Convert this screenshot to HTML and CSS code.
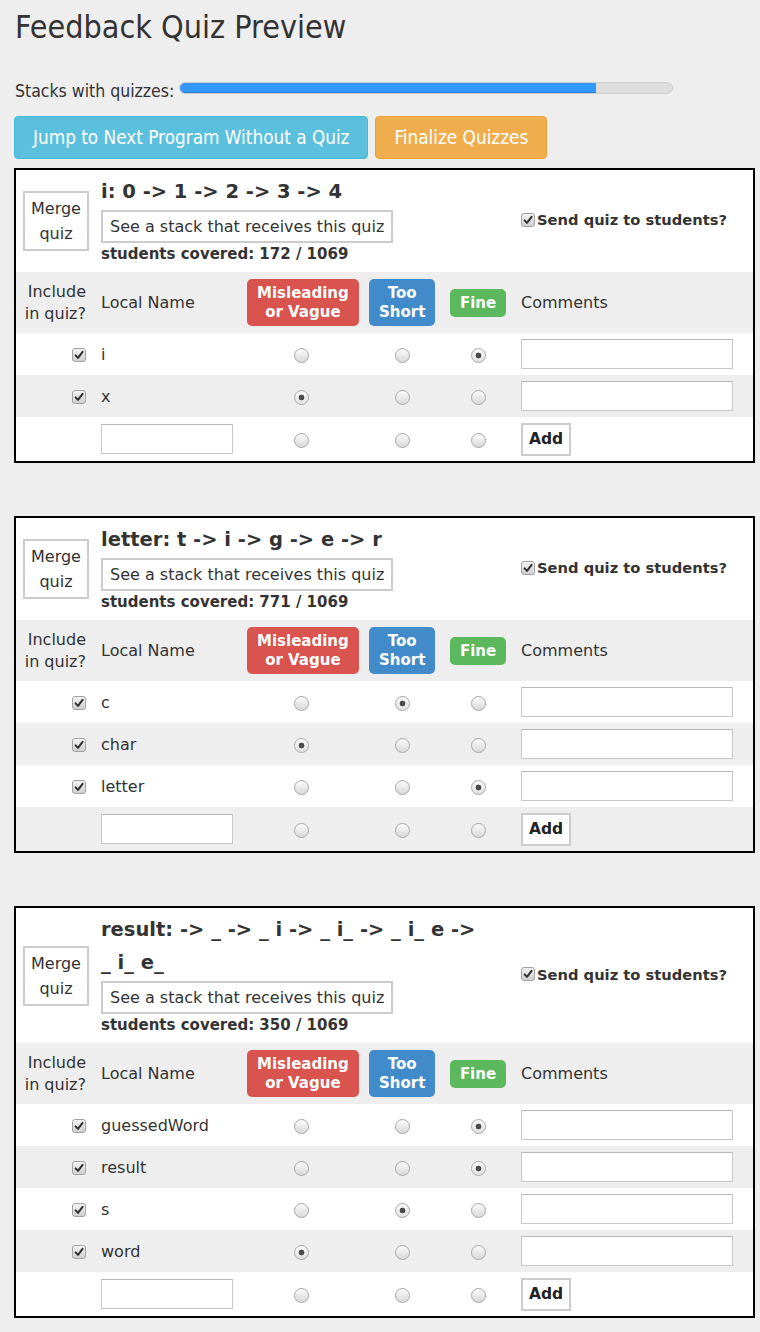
FILE: index.html
```html
<!DOCTYPE html>
<html lang="en">
<head>
<meta charset="utf-8">
<title>Feedback Quiz Preview</title>
<link rel="stylesheet" href="styles.css">
</head>
<body>
<h1 class="page-title">Feedback Quiz Preview</h1>
<div class="progress-line">
  <span class="progress-label">Stacks with quizzes:</span>
  <div class="progress"><div class="progress-fill" style="width:84.4%"></div></div>
</div>
<div class="actions">
  <button class="btn btn-info">Jump to Next Program Without a Quiz</button>
  <button class="btn btn-warning">Finalize Quizzes</button>
</div>

<div class="card">
<table class="quiz">
<colgroup><col class="c1"><col class="c2"><col class="c3"><col class="c4"><col class="c5"><col class="c6"></colgroup>
<tr class="summary">
  <td class="merge-cell"><button class="plain merge">Merge<br>quiz</button></td>
  <td colspan="4" class="info-cell">
    <div class="quiz-title">i: 0 -&gt; 1 -&gt; 2 -&gt; 3 -&gt; 4</div>
    <button class="plain see">See a stack that receives this quiz</button>
    <div class="covered">students covered: 172 / 1069</div>
  </td>
  <td class="send-cell"><label class="send"><span class="cb"><svg viewBox="0 0 12 12"><path d="M2.6 6.4 L5 8.9 L9.6 2.9"/></svg></span>Send quiz to students?</label></td>
</tr>
<tr class="head">
  <th class="inc">Include<br>in quiz?</th>
  <th class="txt">Local Name</th>
  <th class="mid"><span class="badge red">Misleading<br>or Vague</span></th>
  <th class="mid"><span class="badge blue">Too<br>Short</span></th>
  <th class="mid"><span class="badge green">Fine</span></th>
  <th class="txt">Comments</th>
</tr>
<tr class="row">
  <td class="inc"><span class="cb"><svg viewBox="0 0 12 12"><path d="M2.6 6.4 L5 8.9 L9.6 2.9"/></svg></span></td>
  <td class="txt">i</td>
  <td class="mid"><span class="rd"></span></td>
  <td class="mid"><span class="rd"></span></td>
  <td class="mid"><span class="rd on"></span></td>
  <td class="txt"><input class="comment" type="text"></td>
</tr>
<tr class="row">
  <td class="inc"><span class="cb"><svg viewBox="0 0 12 12"><path d="M2.6 6.4 L5 8.9 L9.6 2.9"/></svg></span></td>
  <td class="txt">x</td>
  <td class="mid"><span class="rd on"></span></td>
  <td class="mid"><span class="rd"></span></td>
  <td class="mid"><span class="rd"></span></td>
  <td class="txt"><input class="comment" type="text"></td>
</tr>
<tr class="add-row">
  <td class="inc"></td>
  <td class="txt"><input class="new-name" type="text"></td>
  <td class="mid"><span class="rd"></span></td>
  <td class="mid"><span class="rd"></span></td>
  <td class="mid"><span class="rd"></span></td>
  <td class="txt"><button class="plain add">Add</button></td>
</tr>
</table>
</div>

<div class="card">
<table class="quiz">
<colgroup><col class="c1"><col class="c2"><col class="c3"><col class="c4"><col class="c5"><col class="c6"></colgroup>
<tr class="summary">
  <td class="merge-cell"><button class="plain merge">Merge<br>quiz</button></td>
  <td colspan="4" class="info-cell">
    <div class="quiz-title">letter: t -&gt; i -&gt; g -&gt; e -&gt; r</div>
    <button class="plain see">See a stack that receives this quiz</button>
    <div class="covered">students covered: 771 / 1069</div>
  </td>
  <td class="send-cell"><label class="send"><span class="cb"><svg viewBox="0 0 12 12"><path d="M2.6 6.4 L5 8.9 L9.6 2.9"/></svg></span>Send quiz to students?</label></td>
</tr>
<tr class="head">
  <th class="inc">Include<br>in quiz?</th>
  <th class="txt">Local Name</th>
  <th class="mid"><span class="badge red">Misleading<br>or Vague</span></th>
  <th class="mid"><span class="badge blue">Too<br>Short</span></th>
  <th class="mid"><span class="badge green">Fine</span></th>
  <th class="txt">Comments</th>
</tr>
<tr class="row">
  <td class="inc"><span class="cb"><svg viewBox="0 0 12 12"><path d="M2.6 6.4 L5 8.9 L9.6 2.9"/></svg></span></td>
  <td class="txt">c</td>
  <td class="mid"><span class="rd"></span></td>
  <td class="mid"><span class="rd on"></span></td>
  <td class="mid"><span class="rd"></span></td>
  <td class="txt"><input class="comment" type="text"></td>
</tr>
<tr class="row">
  <td class="inc"><span class="cb"><svg viewBox="0 0 12 12"><path d="M2.6 6.4 L5 8.9 L9.6 2.9"/></svg></span></td>
  <td class="txt">char</td>
  <td class="mid"><span class="rd on"></span></td>
  <td class="mid"><span class="rd"></span></td>
  <td class="mid"><span class="rd"></span></td>
  <td class="txt"><input class="comment" type="text"></td>
</tr>
<tr class="row">
  <td class="inc"><span class="cb"><svg viewBox="0 0 12 12"><path d="M2.6 6.4 L5 8.9 L9.6 2.9"/></svg></span></td>
  <td class="txt">letter</td>
  <td class="mid"><span class="rd"></span></td>
  <td class="mid"><span class="rd"></span></td>
  <td class="mid"><span class="rd on"></span></td>
  <td class="txt"><input class="comment" type="text"></td>
</tr>
<tr class="add-row">
  <td class="inc"></td>
  <td class="txt"><input class="new-name" type="text"></td>
  <td class="mid"><span class="rd"></span></td>
  <td class="mid"><span class="rd"></span></td>
  <td class="mid"><span class="rd"></span></td>
  <td class="txt"><button class="plain add">Add</button></td>
</tr>
</table>
</div>

<div class="card">
<table class="quiz">
<colgroup><col class="c1"><col class="c2"><col class="c3"><col class="c4"><col class="c5"><col class="c6"></colgroup>
<tr class="summary">
  <td class="merge-cell"><button class="plain merge">Merge<br>quiz</button></td>
  <td colspan="4" class="info-cell">
    <div class="quiz-title">result: -&gt; _ -&gt; _ i -&gt; _ i_ -&gt; _ i_ e -&gt; _ i_ e_</div>
    <button class="plain see">See a stack that receives this quiz</button>
    <div class="covered">students covered: 350 / 1069</div>
  </td>
  <td class="send-cell"><label class="send"><span class="cb"><svg viewBox="0 0 12 12"><path d="M2.6 6.4 L5 8.9 L9.6 2.9"/></svg></span>Send quiz to students?</label></td>
</tr>
<tr class="head">
  <th class="inc">Include<br>in quiz?</th>
  <th class="txt">Local Name</th>
  <th class="mid"><span class="badge red">Misleading<br>or Vague</span></th>
  <th class="mid"><span class="badge blue">Too<br>Short</span></th>
  <th class="mid"><span class="badge green">Fine</span></th>
  <th class="txt">Comments</th>
</tr>
<tr class="row">
  <td class="inc"><span class="cb"><svg viewBox="0 0 12 12"><path d="M2.6 6.4 L5 8.9 L9.6 2.9"/></svg></span></td>
  <td class="txt">guessedWord</td>
  <td class="mid"><span class="rd"></span></td>
  <td class="mid"><span class="rd"></span></td>
  <td class="mid"><span class="rd on"></span></td>
  <td class="txt"><input class="comment" type="text"></td>
</tr>
<tr class="row">
  <td class="inc"><span class="cb"><svg viewBox="0 0 12 12"><path d="M2.6 6.4 L5 8.9 L9.6 2.9"/></svg></span></td>
  <td class="txt">result</td>
  <td class="mid"><span class="rd"></span></td>
  <td class="mid"><span class="rd"></span></td>
  <td class="mid"><span class="rd on"></span></td>
  <td class="txt"><input class="comment" type="text"></td>
</tr>
<tr class="row">
  <td class="inc"><span class="cb"><svg viewBox="0 0 12 12"><path d="M2.6 6.4 L5 8.9 L9.6 2.9"/></svg></span></td>
  <td class="txt">s</td>
  <td class="mid"><span class="rd"></span></td>
  <td class="mid"><span class="rd on"></span></td>
  <td class="mid"><span class="rd"></span></td>
  <td class="txt"><input class="comment" type="text"></td>
</tr>
<tr class="row">
  <td class="inc"><span class="cb"><svg viewBox="0 0 12 12"><path d="M2.6 6.4 L5 8.9 L9.6 2.9"/></svg></span></td>
  <td class="txt">word</td>
  <td class="mid"><span class="rd on"></span></td>
  <td class="mid"><span class="rd"></span></td>
  <td class="mid"><span class="rd"></span></td>
  <td class="txt"><input class="comment" type="text"></td>
</tr>
<tr class="add-row">
  <td class="inc"></td>
  <td class="txt"><input class="new-name" type="text"></td>
  <td class="mid"><span class="rd"></span></td>
  <td class="mid"><span class="rd"></span></td>
  <td class="mid"><span class="rd"></span></td>
  <td class="txt"><button class="plain add">Add</button></td>
</tr>
</table>
</div>
</body>
</html>
```

FILE: styles.css
```css
html { background: #eeeeee; }
body {
  margin: 0;
  padding: 0 5px 16px 14px;
  background: #eeeeee;
  color: #333333;
  font-family: "DejaVu Sans", Verdana, sans-serif;
  font-size: 16px;
}

/* header area (condensed face) */
.page-title,
.progress-label,
.btn {
  font-family: "DejaVu Sans Condensed", "DejaVu Sans", sans-serif;
  font-stretch: condensed;
}
.page-title {
  margin: 9px 0 0 1px;
  font-size: 32px;
  line-height: 36px;
  font-weight: normal;
  color: #333333;
}
.progress-line {
  display: flex;
  align-items: flex-start;
  margin-top: 35px;
  height: 22px;
}
.progress-label {
  font-size: 17.5px;
  line-height: 22px;
  margin-left: 1px;
}
.progress {
  width: 494px;
  height: 12px;
  margin: 2px 0 0 5px;
  box-sizing: border-box;
  border: 1px solid #cfcfcf;
  border-radius: 6px;
  background: #dddddd;
  overflow: hidden;
}
.progress-fill {
  height: 100%;
  background: #3399ff;
  box-shadow: inset 0 -1px 0 #2a7fd6;
}
.actions {
  display: flex;
  gap: 7px;
  margin-top: 14px;
}
.btn {
  height: 43px;
  padding: 0 18px;
  border-radius: 4px;
  border: 1px solid;
  color: #ffffff;
  font-size: 18.8px;
  line-height: 21px;
}
.btn-info { background: #5bc0de; border-color: #46b8da; }
.btn-warning { background: #f0ad4e; border-color: #eea236; }

/* quiz cards */
.card {
  width: 741px;
  box-sizing: border-box;
  margin-top: 9px;
  margin-bottom: 53px;
  border: 2px solid #000000;
  background: #ffffff;
}
.card:last-child { margin-bottom: 0; }
.quiz {
  width: 737px;
  border-collapse: collapse;
  table-layout: fixed;
}
.c1 { width: 78px; }
.c2 { width: 146px; }
.c3 { width: 122px; }
.c4 { width: 80px; }
.c5 { width: 72px; }
.c6 { width: 239px; }

.quiz tr:nth-child(even) { background: #eeeeee; }
.quiz td, .quiz th {
  padding: 0 7px;
  vertical-align: middle;
  font-weight: normal;
}
.inc { text-align: right; padding-right: 8px !important; }
.txt { text-align: left; }
.mid { text-align: center; }

.merge-cell { text-align: right; }
.plain {
  background: #ffffff;
  border: 2px solid #cccccc;
  color: #333333;
  font-family: "DejaVu Sans", Verdana, sans-serif;
  font-size: 16px;
  border-radius: 0;
}
.merge {
  padding: 3px 6px;
  line-height: 25px;
}
.info-cell { padding: 5px 7px 7px !important; }
.quiz-title {
  max-width: 385px;
  font-size: 19.5px;
  line-height: 33px;
  font-weight: bold;
}
.see {
  display: block;
  width: max-content;
  height: 33px;
  margin-top: 2px;
  padding: 0 7px;
  line-height: 19px;
}
.covered {
  font-size: 15px;
  line-height: 22px;
  font-weight: bold;
}
.send {
  display: inline-flex;
  align-items: center;
  gap: 2px;
  font-size: 14.7px;
  font-weight: bold;
}

.head th {
  height: 60px;
  padding-top: 7px;
  padding-bottom: 7px;
  line-height: 22px;
  box-sizing: border-box;
}
.badge {
  display: inline-block;
  padding: 5px 10px 4px;
  border-radius: 5px;
  color: #ffffff;
  font-weight: bold;
  font-size: 15px;
  line-height: 19px;
}
.red { background: #d9534f; }
.blue { background: #428bca; }
.green { background: #5cb85c; }

.row td { height: 42px; }
.add-row td { height: 44px; }

.cb {
  display: inline-block;
  vertical-align: middle;
  width: 14px;
  height: 14px;
  box-sizing: border-box;
  border: 1px solid #a3a3a3;
  border-radius: 3px;
  background: linear-gradient(#f4f4f4, #cfcfcf);
}
.cb svg {
  display: block;
  width: 12px;
  height: 12px;
}
.cb path {
  fill: none;
  stroke: #2f2f2f;
  stroke-width: 2;
  stroke-linecap: round;
  stroke-linejoin: round;
}
.rd {
  display: inline-block;
  vertical-align: middle;
  width: 15px;
  height: 15px;
  box-sizing: border-box;
  border: 1px solid #a8a8a8;
  border-radius: 50%;
  background: linear-gradient(#fbfbfb, #d9d9d9);
}
.rd.on {
  background: radial-gradient(circle, #4a4a4a 0 2.6px, transparent 3.2px), linear-gradient(#fbfbfb, #e0e0e0);
}
.comment, .new-name {
  display: block;
  height: 30px;
  box-sizing: border-box;
  border: 1px solid #c8c8c8;
  border-top-color: #b8b8b8;
  background: #ffffff;
  padding: 2px 4px;
  font-family: "DejaVu Sans", Verdana, sans-serif;
  font-size: 15px;
}
.comment { width: 212px; }
.new-name { width: 132px; }
.add {
  display: block;
  height: 33px;
  padding: 0 6px;
  font-weight: bold;
  font-size: 15.5px;
  color: #222222;
}
```
